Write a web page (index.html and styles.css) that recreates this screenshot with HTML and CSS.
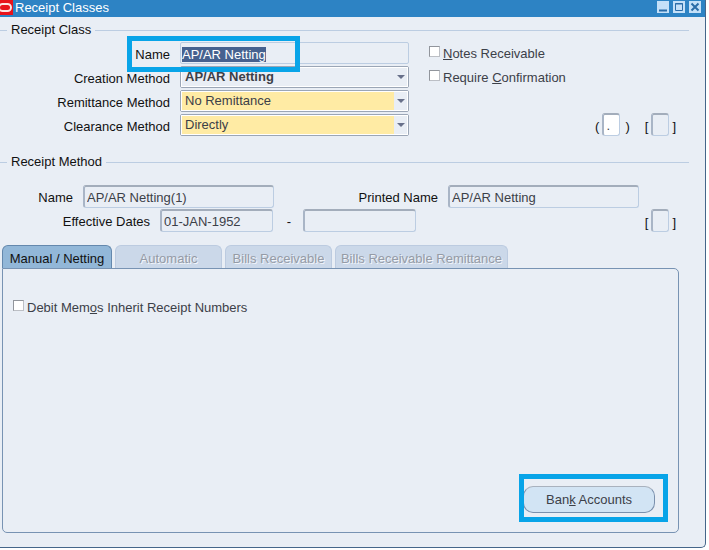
FILE: index.html
```html
<!DOCTYPE html>
<html lang="en">
<head>
  <meta charset="UTF-8">
  <title>Receipt Classes</title>
  <link rel="stylesheet" href="styles.css">
</head>
<body>

<div class="window">
  <header class="titlebar">
    <svg class="logo" viewBox="0 0 13 15" aria-hidden="true">
      <rect width="13" height="15" fill="#e8131b"/>
      <rect x="-1" y="4" width="12" height="7" rx="3.5" fill="none" stroke="#fde4e2" stroke-width="2"/>
    </svg>
    <h1>Receipt Classes</h1>
    <div class="controls">
      <button type="button" aria-label="Minimize">
        <svg viewBox="0 0 12 12"><path d="M2 9.5h8" stroke="#2a6ca8" stroke-width="2"/></svg>
      </button>
      <button type="button" aria-label="Maximize">
        <svg viewBox="0 0 12 12"><path d="M2.5 2.5h7v7h-7z M2 3h8" fill="none" stroke="#2a6ca8"/></svg>
      </button>
      <button type="button" aria-label="Close">
        <svg viewBox="0 0 12 12"><path d="M2.5 2.5l7 7M9.5 2.5l-7 7" stroke="#2a6ca8" stroke-width="2"/></svg>
      </button>
    </div>
  </header>

  <form class="content">
    <fieldset class="group">
      <legend>Receipt Class</legend>
      <div class="class-body">
        <div class="class-fields">
          <label for="className">Name</label>
          <div class="field">
            <input id="className" class="name-input" type="text" value="AP/AR Netting">
          </div>
          <label for="creation">Creation Method</label>
          <div class="select">
            <select id="creation" class="bold"><option>AP/AR Netting</option></select>
          </div>
          <label for="remittance">Remittance Method</label>
          <div class="select required">
            <select id="remittance"><option>No Remittance</option></select>
          </div>
          <label for="clearance">Clearance Method</label>
          <div class="select required">
            <select id="clearance"><option>Directly</option></select>
          </div>
          <div class="highlight highlight-name"></div>
        </div>
        <div class="class-side">
          <label class="check"><input type="checkbox"><span><u>N</u>otes Receivable</span></label>
          <label class="check"><input type="checkbox"><span>Require <u>C</u>onfirmation</span></label>
          <div class="flex-row">
            <span>(</span><input class="tiny white" type="text" value="." aria-label="Context"><span class="paren">)</span>
            <span>[</span><input class="tiny" type="text" aria-label="Flexfield"><span>]</span>
          </div>
        </div>
      </div>
    </fieldset>

    <fieldset class="group method">
      <legend>Receipt Method</legend>
      <div class="method-row">
        <label class="name-label" for="methodName">Name</label>
        <input id="methodName" class="text wide" type="text" value="AP/AR Netting(1)">
        <label class="printed-label" for="printedName">Printed Name</label>
        <input id="printedName" class="text wide" type="text" value="AP/AR Netting">
      </div>
      <div class="method-row">
        <label class="dates-label" for="dateFrom">Effective Dates</label>
        <input id="dateFrom" class="text date" type="text" value="01-JAN-1952">
        <span class="dash">-</span>
        <input class="text date" type="text" aria-label="Effective date to">
        <div class="flex-row">
          <span>[</span><input class="tiny" type="text" aria-label="Method flexfield"><span>]</span>
        </div>
      </div>
    </fieldset>

    <div class="tabs" role="tablist">
      <button type="button" role="tab" class="tab active">Manual / Netting</button>
      <button type="button" role="tab" class="tab mid" disabled>Automatic</button>
      <button type="button" role="tab" class="tab mid" disabled>Bills Receivable</button>
      <button type="button" role="tab" class="tab long" disabled>Bills Receivable Remittance</button>
    </div>
    <div class="panel">
      <label class="check"><input type="checkbox"><span>Debit Mem<u>o</u>s Inherit Receipt Numbers</span></label>
      <div class="actions">
        <button type="button" class="bank">Ban<u>k</u> Accounts</button>
        <div class="highlight highlight-bank"></div>
      </div>
    </div>
  </form>
</div>

<script>
// the name is selected when the form opens
const nameField = document.getElementById('className');
nameField.focus();
nameField.select();
</script>

</body>
</html>
```
FILE: styles.css
```css
* {
  box-sizing: border-box;
}
body {
  margin: 0;
  background: #fff;
  color: #111;
  font: 13px/16px "Liberation Sans", Arial, sans-serif;
}
input, select, button {
  font: inherit;
  color: #3c4048;
  margin: 0;
}
.window {
  display: flex;
  flex-direction: column;
  min-height: calc(100vh - 2px);
  margin-right: 3px;
  background: #e9eef5;
  border: solid #45668a;
  border-width: 0 1px 1px 0;
  border-radius: 0 0 5px 0;
}

/* title bar */
.titlebar {
  display: flex;
  align-items: flex-start;
  height: 17px;
  background: #2d83c4;
  color: #fff;
}
.logo {
  width: 13px;
  height: 15px;
}
.titlebar h1 {
  flex: 1;
  margin: 0;
  padding-left: 2px;
  font-size: 13px;
  font-weight: normal;
  line-height: 16px;
}
.controls {
  display: flex;
  gap: 4px;
  padding: 1px 4px 0 0;
}
.controls button {
  width: 12px;
  height: 12px;
  padding: 0;
  border: 0;
  background: #c4e0f8;
}
.controls svg {
  display: block;
}

/* groups */
.content {
  display: flex;
  flex: 1;
  flex-direction: column;
  padding-top: 5px;
}
.group {
  min-width: 0;
  margin: 0 16px 0 0;
  padding: 0;
  border: 0 solid #bccde2;
  border-top-width: 1px;
}
legend {
  margin-left: 7px;
  padding: 0 4px;
}
.class-body {
  display: flex;
  gap: 20px;
  padding-top: 4px;
}
.class-fields {
  position: relative;
  display: grid;
  grid-template-columns: 170px 229px;
  grid-auto-rows: 22px;
  gap: 2px 10px;
}
.class-fields label {
  padding-top: 5px;
  text-align: right;
}
.class-side {
  display: flex;
  flex: 1;
  flex-direction: column;
}
.class-side .check {
  height: 24px;
  padding-top: 4px;
}
.class-side .flex-row {
  margin-top: auto;
}

/* fields */
.field {
  padding: 2px 1px;
  border: 1px solid #bccde2;
  border-radius: 2px;
}
.name-input {
  display: block;
  width: 100%;
  height: 18px;
  padding: 0;
  border: 0;
  outline: 0;
  background: transparent;
}
.name-input::selection {
  background: #46618f;
  color: #fff;
}
.text, .tiny {
  height: 23px;
  padding: 0 1px 0 2px;
  background: #e9eef5;
  border: 1px solid #bccde2;
  border-top: 2px solid #a3adbb;
  border-left: 2px solid #a9b5c6;
  border-radius: 3px;
}
.tiny {
  width: 18px;
}
.white {
  background: #fff;
}
.select {
  position: relative;
  border: 1px solid #9ba6b6;
  border-radius: 2px;
}
.select select {
  display: block;
  width: 100%;
  height: 20px;
  padding: 0 16px 0 3px;
  border: 1px solid #fff;
  border-radius: 0;
  background: #e9eef5;
  appearance: none;
}
.select .bold {
  font-weight: bold;
}
.select::after {
  content: "";
  position: absolute;
  top: 8px;
  right: 3px;
  border: solid transparent;
  border-width: 4px 4px 0;
  border-top-color: #68708a;
}
.required select {
  background: linear-gradient(to left, #e9eef5 13px, #ffeba4 13px);
}
.check {
  display: flex;
  align-items: flex-start;
  gap: 3px;
  color: #3c4048;
}
.check input {
  width: 11px;
  height: 11px;
  appearance: none;
  background: #fff;
  border: 1px solid #bcbfc5;
  border-top-color: #91959c;
  border-left-color: #91959c;
}
.flex-row {
  display: flex;
  align-items: flex-start;
  justify-content: flex-end;
  gap: 3px;
  margin-left: auto;
  padding-right: 13px;
}
.flex-row span {
  padding-top: 6px;
}
.flex-row .paren {
  padding: 6px 12px 0 2px;
}

/* receipt method */
.method {
  margin-top: 18px;
}
.method legend {
  margin-bottom: 15px;
}
.method-row {
  display: flex;
  height: 24px;
}
.method-row label {
  padding: 5px 10px 0 0;
  text-align: right;
}
.wide {
  width: 191px;
}
.date {
  width: 113px;
}
.name-label {
  width: 83px;
}
.printed-label {
  width: 174px;
}
.dates-label {
  width: 160px;
}
.dash {
  width: 30px;
  padding: 5px 0 0 2px;
  text-align: center;
}

/* tabs */
.tabs {
  display: flex;
  gap: 3px;
  margin: 12px 0 0 2px;
}
.tab {
  height: 23px;
  padding: 3px 0 0;
  border: 1px solid #bccbe0;
  border-bottom: 0;
  border-radius: 6px 6px 0 0;
  background: #cbd8e9;
  color: #959ba6;
  text-shadow: 1px 1px #f2f5fa;
  white-space: nowrap;
}
.tab.active {
  width: 110px;
  border-color: #6488ad;
  background: #92b7d8;
  color: #111;
  text-shadow: none;
}
.mid {
  width: 107px;
}
.long {
  width: 173px;
}
.panel {
  display: flex;
  flex: 1;
  flex-direction: column;
  justify-content: space-between;
  margin: 0 26px 14px 2px;
  padding: 31px 23px 19px 10px;
  border: 1px solid #7893b3;
  border-radius: 0 5px 5px 5px;
}
.actions {
  position: relative;
  align-self: flex-end;
}
.bank {
  display: block;
  width: 132px;
  height: 27px;
  border: 1px solid #7a90ad;
  border-top-color: #a9b2be;
  border-radius: 10px;
  background: #d2e4f4;
}

/* callout boxes over the form */
.highlight {
  position: absolute;
  border: 5px solid #08a4e8;
  pointer-events: none;
}
.highlight-name {
  top: -6px;
  left: 127px;
  width: 173px;
  height: 36px;
}
.highlight-bank {
  inset: -12px -13px -9px -4px;
}
```
